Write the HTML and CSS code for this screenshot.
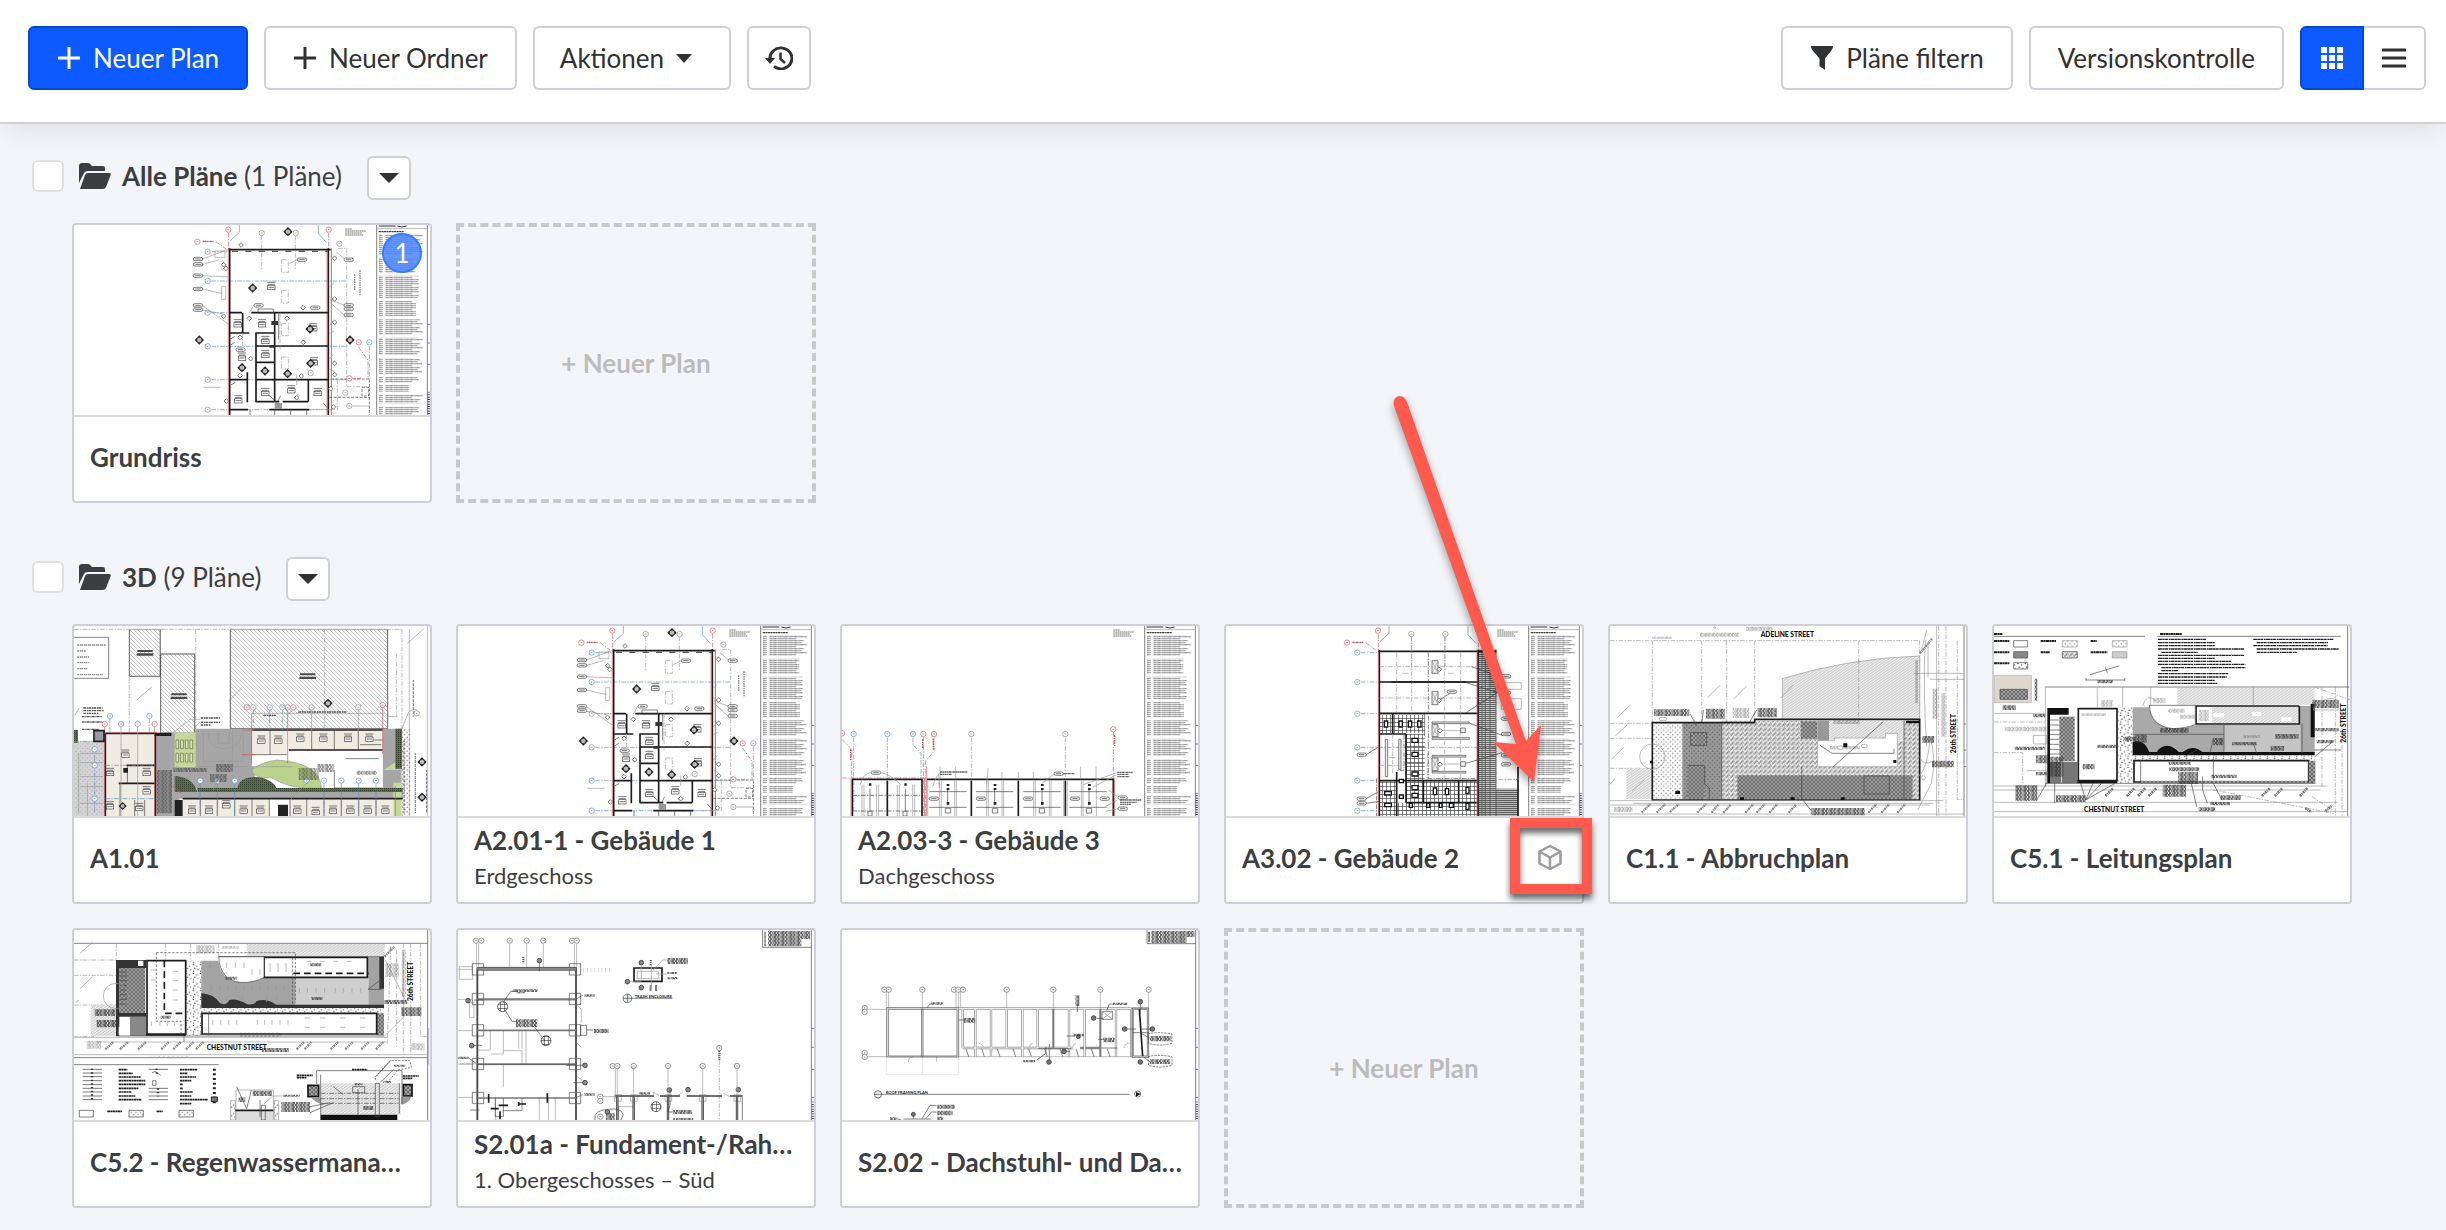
FILE: index.html
```html
<!DOCTYPE html>
<html lang="de">
<head>
<meta charset="utf-8">
<meta name="viewport" content="width=device-width, initial-scale=1">
<title>Pläne</title>
<link rel="stylesheet" href="styles.css">
</head>
<body>
<svg class="defs" width="0" height="0" aria-hidden="true">
  <defs>
    <pattern id="hatch" width="12" height="12" patternUnits="userSpaceOnUse"><rect width="12" height="12" fill="#fff"/><path d="M0 0L12 12M-2 10L2 14M10 -2L14 2" stroke="#aaa" stroke-width="2" fill="none"/></pattern>
    <pattern id="hatch2" width="12" height="8" patternUnits="userSpaceOnUse"><rect width="12" height="8" fill="#ececec"/><path d="M0 8L12 0" stroke="#b0b0b0" stroke-width="2"/></pattern>
    <pattern id="cross" width="14" height="14" patternUnits="userSpaceOnUse"><path d="M0 4L4 0M0 10L14 3M4 14L10 0M0 14L14 6M10 14L14 10" stroke="#555" stroke-width="1.5" fill="none"/></pattern>
    <pattern id="crossdark" width="12" height="12" patternUnits="userSpaceOnUse"><rect width="12" height="12" fill="#a2a2a2"/><path d="M0 12L12 0M0 0L12 12" stroke="#4b4b4b" stroke-width="2"/></pattern>
    <pattern id="dots" width="14" height="14" patternUnits="userSpaceOnUse"><path d="M2 2h3v3h-3zM9 9h3v3h-3z" fill="#333"/></pattern>
    <pattern id="specks" width="22" height="26" patternUnits="userSpaceOnUse"><path d="M2 3h4v3h-4zM13 7h3v4h-3zM6 14h4v3h-4zM17 18h3v3h-3zM3 22h3v3h-3z" fill="#333"/></pattern>
    <pattern id="green" width="6" height="6" patternUnits="userSpaceOnUse"><rect width="6" height="6" fill="#5a6b4c"/><path d="M0 0h3v3h-3z" fill="#37452e"/></pattern>
    <pattern id="grid" width="12" height="12" patternUnits="userSpaceOnUse"><path d="M0 1H12M1 0V12" stroke="#222" stroke-width="2"/></pattern>
    <pattern id="rows" width="200" height="6" patternUnits="userSpaceOnUse"><path d="M0 2H200" stroke="#333" stroke-width="3"/></pattern>
    <pattern id="words" width="164" height="24" patternUnits="userSpaceOnUse" x="968" y="0">
      <g stroke="#777" stroke-width="3" stroke-dasharray="7 1 4 1 10 2 5 1"><path d="M0 2h12M20 2h96M0 8h12M20 8h112M0 14h12M20 14h80M0 20h12M20 20h104"/></g>
    </pattern>
    <pattern id="scrawl" width="47" height="12" patternUnits="userSpaceOnUse">
      <g stroke="#333" stroke-width="4" stroke-dasharray="6 2 3 2 8 2"><path d="M0 3h47M3 9h44"/></g>
    </pattern>

    <symbol id="mark" viewBox="-14 -14 28 28" overflow="visible"><path d="M0 -14L14 0L0 14L-14 0z" fill="#222"/><circle r="8" fill="#bbb" stroke="#111" stroke-width="2"/></symbol>
    <g id="bubble"><circle r="8" fill="#fff" stroke="currentColor" stroke-width="2"/><path d="M-3 0h6" stroke="currentColor" stroke-width="2"/></g>
    <g id="tag"><rect x="-14" y="-5" width="28" height="10" rx="5" fill="#fff" stroke="#444" stroke-width="2"/><path d="M-8 0h16" stroke="#777" stroke-width="3"/></g>
    <g id="dia"><path d="M0 -7L7 0L0 7L-7 0z" fill="#fff" stroke="#444" stroke-width="2"/></g>
    <g id="room"><path d="M-12 -10h24M-10 -4h20" stroke="#777" stroke-width="3"/><rect x="-11" y="-1" width="22" height="13" fill="#fff" stroke="#444" stroke-width="2"/><path d="M-8 5h16" stroke="#777" stroke-width="3"/></g>

    <!-- Legend column printed on the right edge of the A sheets -->
    <g id="legend">
      <path class="k" d="M962 48V618M1114 48V618M1114 346h8M1114 402h8M1114 466h8M1114 550h8"/>
      <path class="g" d="M962 59h152"/>
      <path d="M968 51h50M1024 51q14 6 28 0" stroke="#333" stroke-width="3" fill="none"/>
      <path d="M968 68h76" stroke="#444" stroke-width="4" stroke-dasharray="8 1 5 1"/>
      <path fill="url(#words)" d="M968 76h140v62h-140zM968 146h110v46h-110zM968 200h120v68h-120zM968 276h112v46h-112zM968 331h132v46h-132zM968 386h140v52h-140zM968 448h130v48h-130zM968 503h120v18h-120zM968 528h90v20h-90zM968 558h136v25h-136zM968 594h120v24h-120z"/>
      <path d="M868 60h20M868 66h62M868 72h50M868 78h54" stroke="#777" stroke-width="3" stroke-dasharray="6 1 4 1"/>
      <path d="M1118 556v62" stroke="#333" stroke-width="7" stroke-dasharray="3 4"/>
    </g>

    <!-- Axes shared by the floor plan and the ceiling plan -->
    <g id="axes">
      <path class="b" d="M550 48v22l-28 26M787 48v26l24 26"/>
      <path class="g dd" d="M617 80V180M718 80V180"/>
      <path class="r dd" d="M518 72V120M818 72V120M480 98l30 22"/>
      <path d="M440 97h34" stroke="#d8545c" stroke-width="4" stroke-dasharray="6 1 3 1"/>
      <g color="#d8545c"><use href="#bubble" x="517" y="62"/><use href="#bubble" x="818" y="62"/><use href="#bubble" x="424" y="98"/></g>
      <g color="#888"><use href="#bubble" x="617" y="72"/><use href="#bubble" x="719" y="72"/></g>
      <path class="b dd" d="M466 128H520M466 216H870M466 311H520M466 412H870M466 512H870M466 602H820"/>
      <g color="#5b8fc4"><use href="#bubble" x="455" y="128"/><use href="#bubble" x="455" y="216"/><use href="#bubble" x="455" y="311"/><use href="#bubble" x="455" y="412"/><use href="#bubble" x="455" y="512"/><use href="#bubble" x="455" y="602"/></g>
    </g>

    <symbol id="floorplan" viewBox="54 48 1068 570">
      <use href="#legend"/>
      <use href="#axes"/>
      <path class="k2" d="M521 118V618M817 118V618"/>
      <path class="r" d="M517 118V618M813 118V618"/>
      <path class="k2" d="M518 122H824M522 311h36M586 311H818M656 311V512M522 372h58M598 372h56M600 372V580M656 460h-54M602 411H818M560 311v60M522 512h52M600 512H818M656 512v66M757 512v66M574 490v90M600 578h70M680 578h76M522 602h54M640 602H760"/>
      <path class="k" d="M826 118V618M668 311v80M656 602v16M582 602v16M704 602v16M752 602v16M606 300h46v12h-46z"/>
      <path d="M528 127H816" stroke="#555" stroke-width="4" stroke-dasharray="18 22"/>
      <path class="g dd" d="M846 118h26v415h60M560 372v40M672 311v110M844 512v90h-84"/>
      <path class="g dd" d="M677 152h20v38h-20zM677 244h20v38h-20zM677 344h20v36h-20zM677 444h20v36h-20z"/>
      <path class="k" d="M826 510h116M820 565h120M940 512v106M918 535h20v26h-20z" stroke-dasharray="9 4"/>
      <path class="g" d="M440 150l80-30M440 166l50-14M440 200l80 4M440 240l60 14M440 290l78 56M440 304l60 10M700 164l24-12M840 128l26 22M820 272l44 16M822 280l42 38M580 312l14-24M497 233h12v38h-12zM477 126h30v20h-30zM442 535h52M722 496v32M820 235l12-12M820 262l14 12M820 350l12-14M820 374l14-8M820 450l12-14M820 480l14 8"/>
      <path class="k" d="M524 390l12-8M524 408l12-8M524 528l14-8M640 560l14 12M674 560l-8 16M802 582l12 14"/>
      <path class="r dd" d="M908 414l28 40v56M876 508h40"/>
      <path class="b dd" d="M940 410v100"/>
      <g color="#d8545c"><use href="#bubble" x="908" y="400"/><use href="#bubble" x="880" y="508"/></g>
      <g color="#5b8fc4"><use href="#bubble" x="940" y="400"/></g>
      <g color="#888"><use href="#bubble" x="868" y="551"/><use href="#bubble" x="880" y="591"/><use href="#bubble" x="764" y="492"/><use href="#bubble" x="850" y="104"/></g>
      <path class="g" d="M890 591h50"/>
      <g><use href="#tag" x="426" y="150"/><use href="#tag" x="426" y="166"/><use href="#tag" x="426" y="200"/><use href="#tag" x="426" y="240"/><use href="#tag" x="426" y="289"/><use href="#tag" x="426" y="302"/><use href="#tag" x="738" y="152"/><use href="#tag" x="878" y="152"/><use href="#tag" x="608" y="289"/><use href="#tag" x="778" y="296"/><use href="#tag" x="878" y="289"/><use href="#tag" x="878" y="300"/><use href="#tag" x="878" y="318"/><use href="#tag" x="554" y="422"/></g>
      <g><use href="#dia" x="555" y="108"/><use href="#dia" x="503" y="167"/><use href="#dia" x="510" y="178"/><use href="#dia" x="836" y="148"/><use href="#dia" x="836" y="270"/><use href="#dia" x="741" y="296"/><use href="#dia" x="580" y="328"/><use href="#dia" x="693" y="328"/><use href="#dia" x="836" y="340"/><use href="#dia" x="742" y="400"/><use href="#dia" x="552" y="385"/><use href="#dia" x="836" y="463"/><use href="#dia" x="584" y="449"/><use href="#dia" x="552" y="500"/><use href="#dia" x="736" y="501"/><use href="#dia" x="836" y="497"/><use href="#dia" x="722" y="566"/><use href="#dia" x="824" y="539"/><use href="#dia" x="832" y="594"/><use href="#dia" x="511" y="576"/><use href="#dia" x="503" y="322"/></g>
      <g><use href="#room" x="646" y="230"/><use href="#room" x="545" y="342"/><use href="#room" x="618" y="342"/><use href="#room" x="772" y="354"/><use href="#room" x="628" y="392"/><use href="#room" x="628" y="434"/><use href="#room" x="774" y="456"/><use href="#room" x="558" y="442"/><use href="#room" x="628" y="548"/><use href="#room" x="706" y="540"/><use href="#room" x="785" y="548"/><use href="#room" x="547" y="570"/></g>
      <g><use href="#mark" x="682" y="54" width="28" height="28"/><use href="#mark" x="576" y="223" width="28" height="28"/><use href="#mark" x="416" y="379" width="28" height="28"/><use href="#mark" x="868" y="379" width="28" height="28"/><use href="#mark" x="748" y="346" width="28" height="28"/><use href="#mark" x="750" y="449" width="28" height="28"/><use href="#mark" x="544" y="462" width="28" height="28"/><use href="#mark" x="681" y="480" width="28" height="28"/><use href="#mark" x="613" y="472" width="28" height="28"/></g>
      <path d="M896 196v48M912 184v76" stroke="#888" stroke-width="4" stroke-dasharray="5 2"/>
      <path d="M646 336h20v12h-20zM640 408h16v8h-16z" fill="#333"/>
      <path d="M656 582h22v18h-22z" fill="#999"/>
    </symbol>
  </defs>
</svg>

<header class="toolbar">
  <button class="btn btn-primary" type="button">
    <svg class="icon" viewBox="0 0 24 24"><path d="M12 1V23M1 12H23" stroke="currentColor" stroke-width="3" fill="none"/></svg>
    Neuer Plan
  </button>
  <button class="btn" type="button">
    <svg class="icon" viewBox="0 0 24 24"><path d="M12 1V23M1 12H23" stroke="currentColor" stroke-width="3" fill="none"/></svg>
    Neuer Ordner
  </button>
  <button class="btn btn-menu" type="button">
    Aktionen
    <svg class="caret" viewBox="0 0 16 9"><path d="M0 0H16L8 9z" fill="currentColor"/></svg>
  </button>
  <button class="btn btn-square" type="button" aria-label="Verlauf">
    <svg class="icon-lg" viewBox="0 0 28 24"><path d="M5 13A11 11 0 1 1 9 20.500" stroke="currentColor" stroke-width="3" fill="none" transform="translate(0 1) scale(1 .95)"/><path d="M0 12H10L5 18z" fill="currentColor"/><path d="M15.500 6.500V13L20 17" stroke="currentColor" stroke-width="2.500" fill="none"/></svg>
  </button>
  <div class="spacer"></div>
  <button class="btn" type="button">
    <svg class="icon" viewBox="0 0 24 24"><path d="M1 0H23Q23.500 2 21 5L15 12.500V24L9.500 20V12.500L3 5Q.5 2 1 0z" fill="currentColor"/></svg>
    Pläne filtern
  </button>
  <button class="btn" type="button">Versionskontrolle</button>
  <div class="switch" role="group" aria-label="Ansicht">
    <button class="btn btn-square btn-primary" type="button" aria-label="Kacheln" aria-pressed="true">
      <svg class="icon" viewBox="0 0 24 24"><path d="M1 1h6v6h-6zM9 1h6v6h-6zM17 1h6v6h-6zM1 9h6v6h-6zM9 9h6v6h-6zM17 9h6v6h-6zM1 17h6v6h-6zM9 17h6v6h-6zM17 17h6v6h-6z" fill="currentColor"/></svg>
    </button>
    <button class="btn btn-square" type="button" aria-label="Liste" aria-pressed="false">
      <svg class="icon" viewBox="0 0 24 24"><path d="M1 4H23M1 12H23M1 20H23" stroke="currentColor" stroke-width="3" stroke-linecap="round"/></svg>
    </button>
  </div>
</header>

<main class="content">
  <section class="folder">
    <div class="folder-head">
      <input class="check" type="checkbox" id="f1">
      <label class="folder-label" for="f1">
        <svg class="folder-icon" viewBox="0 0 32 26"><path d="M0 20V3Q0 0 3 0H9Q11 0 12 2L13 3H24Q26 3 26 5V8H9Q6 8 5 10z" fill="currentColor"/><path d="M1 26L6 12Q7 10 9 10H30Q32.500 10 31.500 12.500L27 24Q26 26 24 26z" fill="currentColor"/></svg>
        <span><strong>Alle Pläne</strong> (1 Pläne)</span>
      </label>
      <button class="btn drop" type="button" aria-label="Ordnermenü"><svg class="caret caret-lg" viewBox="0 0 20 10"><path d="M0 0H20L10 10z" fill="currentColor"/></svg></button>
    </div>
    <div class="grid">
      <article class="card">
        <div class="thumb"><svg viewBox="54 48 1068 570" preserveAspectRatio="none"><use href="#floorplan" x="54" y="48" width="1068" height="570"/></svg></div>
        <span class="badge">1</span>
        <div class="foot"><h3>Grundriss</h3></div>
      </article>
      <button class="add" type="button">+ Neuer Plan</button>
    </div>
  </section>

  <section class="folder">
    <div class="folder-head">
      <input class="check" type="checkbox" id="f2">
      <label class="folder-label" for="f2">
        <svg class="folder-icon" viewBox="0 0 32 26"><path d="M0 20V3Q0 0 3 0H9Q11 0 12 2L13 3H24Q26 3 26 5V8H9Q6 8 5 10z" fill="currentColor"/><path d="M1 26L6 12Q7 10 9 10H30Q32.500 10 31.500 12.500L27 24Q26 26 24 26z" fill="currentColor"/></svg>
        <span><strong>3D</strong> (9 Pläne)</span>
      </label>
      <button class="btn drop" type="button" aria-label="Ordnermenü"><svg class="caret caret-lg" viewBox="0 0 20 10"><path d="M0 0H20L10 10z" fill="currentColor"/></svg></button>
    </div>
    <div class="grid">

      <article class="card">
        <div class="thumb"><svg viewBox="222 258 1068 570" preserveAspectRatio="none">
          <path fill="url(#hatch)" class="g" d="M388 268h92v141h-92zM482 342h102v236h-102zM691 268h472v298H691z"/>
          <path class="k" d="M388 268v141h93V268M482 342h102v236M482 342v236M691 268v298h472V268M222 292h104v123H222"/>
          <path class="g dd" d="M222 268H1206M388 409v170M587 268v400M974 268v300M1206 268v560M1190 340v190"/>
          <path class="g" d="M1282 258v570M1228 268v560M410 480l46-40M686 484l40-42M1222 310l50-44"/>
          <path d="M232 315h86M232 333h26M232 351h36M232 368h34M232 386h32M232 404h76M1240 420v110M1246 640v180M1212 600v220M1280 690v130" stroke="#888" stroke-width="4" stroke-dasharray="6 2 3 1" fill="none"/>
          <path d="M250 504h58M250 512h62M250 520h46M246 530h60M246 546h60M246 568h50M602 534h58M602 547h58M602 555h30M790 526h40M895 516h146" stroke="#555" stroke-width="4" stroke-dasharray="8 2 4 1"/>
          <path fill="#4a4a4a" d="M412 330h46v6h-46zM410 340h50v7h-50zM514 460h46v6h-46zM512 470h50v7h-50zM900 400h46v6h-46zM898 410h50v7h-50z"/>
          <path fill="#d6d6d8" d="M222 604h94v224h-94z"/>
          <path fill="url(#dots)" opacity=".4" d="M222 604h94v224h-94z"/>
          <path class="g" d="M240 640h70M240 668h70M240 710h70M240 740h70M240 790h70M236 640v180M262 730v98"/>
          <path fill="#a6a6a6" d="M464 578h74v250h-74zM586 566h170v180H586zM538 756h670v20H538zM524 680h240v66H524zM1148 566h56v180h-56z"/>
          <path fill="#efece1" d="M318 582h146v246H318zM756 572h106v72H756zM866 572h282v56H866zM548 778h260v50H548zM868 778h312v50H868z"/>
          <path fill="#c3d89a" d="M524 578h62v102h-62zM1180 728h24v100h-24zM1152 690l52-36v36z"/>
          <path fill="#fff" d="M864 632h284v112H864z"/>
          <path fill="#b9d38b" class="g" d="M756 692Q770 670 830 660Q960 668 964 744H910Q860 740 816 714Q760 716 756 692z"/>
          <path fill="url(#green)" d="M524 708Q580 712 592 756H524zM712 744Q720 706 780 712Q830 724 832 756H712zM592 744h616v12H592zM1186 566h20v120h-20zM222 570h12v38h-12z"/>
          <path d="M528 600h8v26h-8zM542 600h8v26h-8zM556 600h8v26h-8zM570 600h8v26h-8zM528 640h8v26h-8zM542 640h8v26h-8zM556 640h8v26h-8zM570 640h8v26h-8z" fill="#dce9bd" stroke="#5b6b3d" stroke-width="2"/>
          <path class="g" d="M610 578v86h120v-86M624 578q0 46 46 48q54-2 54-48M654 578v32h34v-32M698 566v112M586 680h290"/>
          <path class="k2" d="M316 580h150M756 570h392M866 630h282M548 776h660M380 676h84M356 730h108M316 580v248M466 580v248"/>
          <path class="k" d="M810 572v72M756 644h106M935 572v56M1003 572v56M1075 572v56M601 778v50M652 778v50M704 778v50M756 778v50M808 778v50M870 778v50M920 778v50M972 778v50M1024 778v50M1076 778v50M1128 778v50M360 730v98M382 676v54M404 780v48M434 780v48M1003 690v54h145M1120 600l30 0M1080 614h64M1036 656h100"/>
          <path class="b dd" d="M222 604h90M284 620v200M316 676h150M316 776h150M600 730v98M652 730v98M704 730v98M972 730v98M1024 730v98M1076 730v98M1128 730v98M330 536v40M448 536v40M809 510v60M847 510v60M760 510v60"/>
          <path class="r" d="M314 560v268M464 560v268M755 520v150M863 510v160M1148 502v140M508 730l36 30M724 570h40M724 644h40M878 510l-14 12M1186 740v88M314 578h156"/>
          <path class="g" d="M363 560v268M413 560v268M935 510v70M1075 510v70M755 520h400M1163 530h30"/>
          <g color="#d8545c"><use href="#bubble" x="314" y="552"/><use href="#bubble" x="464" y="552"/><use href="#bubble" x="740" y="502"/><use href="#bubble" x="863" y="502"/><use href="#bubble" x="880" y="502"/><use href="#bubble" x="1148" y="495"/></g>
          <g color="#5b8fc4"><use href="#bubble" x="330" y="528"/><use href="#bubble" x="448" y="528"/><use href="#bubble" x="760" y="502"/><use href="#bubble" x="809" y="502"/><use href="#bubble" x="847" y="502"/><use href="#bubble" x="601" y="722"/><use href="#bubble" x="652" y="722"/><use href="#bubble" x="704" y="722"/><use href="#bubble" x="920" y="722"/><use href="#bubble" x="972" y="722"/><use href="#bubble" x="1024" y="722"/><use href="#bubble" x="1076" y="722"/><use href="#bubble" x="1128" y="722"/><use href="#bubble" x="284" y="628"/><use href="#bubble" x="284" y="676"/><use href="#bubble" x="284" y="776"/></g>
          <g color="#888"><use href="#bubble" x="363" y="552"/><use href="#bubble" x="413" y="552"/><use href="#bubble" x="935" y="502"/><use href="#bubble" x="1075" y="502"/><use href="#bubble" x="1250" y="520"/></g>
          <g><use href="#room" x="376" y="640"/><use href="#room" x="440" y="695"/><use href="#room" x="330" y="695"/><use href="#room" x="440" y="750"/><use href="#room" x="330" y="795"/><use href="#room" x="418" y="800"/><use href="#room" x="784" y="598"/><use href="#room" x="835" y="598"/><use href="#room" x="901" y="592"/><use href="#room" x="970" y="592"/><use href="#room" x="1044" y="592"/><use href="#room" x="1108" y="592"/><use href="#room" x="576" y="808"/><use href="#room" x="627" y="808"/><use href="#room" x="679" y="792"/><use href="#room" x="731" y="808"/><use href="#room" x="781" y="808"/><use href="#room" x="892" y="808"/><use href="#room" x="947" y="812"/><use href="#room" x="999" y="808"/><use href="#room" x="1051" y="808"/><use href="#room" x="1103" y="808"/><use href="#room" x="1156" y="808"/></g>
          <path fill="url(#scrawl)" opacity=".7" d="M648 672h50v24h-50zM896 684h60v36h-60zM952 672h50v24h-50zM520 684h100v12h-100zM630 702h50v24h-50zM470 690h46v130h-46zM1070 692h60v12h-60z"/>
          <path fill="url(#dots)" d="M1206 566h26v262h-26z"/>
          <path d="M282 572h30v32h-30z" stroke="#222" stroke-width="5" fill="#99a"/><path d="M834 794h30v34h-30zM524 780h24v48h-24zM370 684h14v14h-14zM464 578h50v10h-50z" fill="#222"/>
          <g><use href="#mark" x="970" y="476" width="28" height="28"/><use href="#mark" x="1252" y="652" width="28" height="28"/><use href="#mark" x="1252" y="758" width="28" height="28"/><use href="#mark" x="356" y="786" width="24" height="24"/></g>
          <path class="g" d="M520 578l50-40h30M586 560l14-14M1206 566l20-50q10-8 24-8M224 526l14-22M640 750l20-50M870 780l60-60"/>
        </svg></div>
        <div class="foot"><h3>A1.01</h3></div>
      </article>

      <article class="card">
        <div class="thumb"><svg viewBox="54 48 1068 570" preserveAspectRatio="none"><use href="#floorplan" x="54" y="48" width="1068" height="570"/></svg></div>
        <div class="foot"><h3>A2.01-1 - Gebäude 1</h3><p>Erdgeschoss</p></div>
      </article>

      <article class="card">
        <div class="thumb"><svg viewBox="36 48 1068 570" preserveAspectRatio="none">
          <use href="#legend" x="-18"/>
          <path class="r dd" d="M36 388l29 30v86M280 380v238M312 382v42l-26 30v164M850 366V618M36 504h246"/>
          <path d="M62 418v32M278 388v26M310 386v34M854 376v32" stroke="#d8545c" stroke-width="4" stroke-dasharray="5 2"/>
          <path class="b dd" d="M71 382V618M172 382V618M249 382v22l24 26v74"/>
          <path class="g dd" d="M424 382v122M706 382v122"/>
          <g color="#d8545c"><use href="#bubble" x="36" y="370"/><use href="#bubble" x="280" y="372"/><use href="#bubble" x="312" y="372"/><use href="#bubble" x="850" y="358"/></g>
          <g color="#5b8fc4"><use href="#bubble" x="71" y="372"/><use href="#bubble" x="172" y="372"/><use href="#bubble" x="249" y="372"/></g>
          <g color="#888"><use href="#bubble" x="424" y="372"/><use href="#bubble" x="706" y="372"/></g>
          <path class="k2" d="M65 508H278M290 508H852M67 508v110M276 508v110M424 512v106M172 512v106M565 512v106M706 512v106M850 508v110"/>
          <path class="r" d="M63 504v114M284 504v114M853 504v114M290 470v148"/>
          <path class="g" d="M96 524v94M102 524v94M140 524v94M146 524v94M202 524v94M208 524v94M248 524v94M254 524v94M293 512v106M329 512v106M334 512v106M374 512v106M379 512v106M470 512v106M475 512v106M516 512v106M521 512v106M611 512v106M616 512v106M658 512v106M663 512v106M701 512v106M712 512v106M754 512v106M759 512v106M799 512v106M330 470v36M377 470v36M516 486v20M565 486v20M610 486v20M752 470v36M798 470v36M474 474l-4 48"/>
          <path class="k" d="M298 545h112M298 592h112M438 545h112M438 592h112M580 545h112M580 592h112M718 545h112M718 592h112M120 536v68M226 536v68M353 540v46M494 540v46M636 540v46M777 540v46"/>
          <path class="k dd" d="M67 556h210M67 603h210"/>
          <path class="k" fill="#fff" d="M346 595h16v14h-16zM487 595h16v14h-16zM628 595h16v14h-16zM769 595h16v14h-16zM114 604h12v14h-12zM219 604h12v14h-12z"/>
          <path class="g" d="M90 526q10-38 34-38M152 488q30 4 60 36M328 490q-10 10-20 40M326 492l2 42M636 520l36-28M860 488l-100 36M860 494l-72 38M862 560l-26-20M862 570l-36 20M864 596l-38 8"/>
          <path fill="#222" d="M117 520h7v7h-7zM223 520h7v7h-7zM350 522h8v6h-8zM491 522h8v6h-8zM633 522h8v6h-8zM774 522h8v6h-8zM350 534h8v6h-8zM491 534h8v6h-8zM633 534h8v6h-8zM774 534h8v6h-8zM350 576h8v8h-8zM491 576h8v8h-8zM633 576h8v8h-8zM774 576h8v8h-8z"/>
          <path d="M330 486h82M330 493h36M862 487h46M862 493h34M862 500h36M870 570h64M870 577h50M870 583h34M700 491h34" stroke="#666" stroke-width="4" stroke-dasharray="7 1 4 1"/>
          <g><use href="#tag" x="138" y="488"/><use href="#tag" x="686" y="491"/><use href="#tag" x="312" y="566"/><use href="#tag" x="453" y="566"/><use href="#tag" x="594" y="566"/><use href="#tag" x="735" y="566"/><use href="#tag" x="824" y="566"/><use href="#tag" x="878" y="563"/><use href="#tag" x="878" y="596"/></g>
        </svg></div>
        <div class="foot"><h3>A2.03-3 - Gebäude 3</h3><p>Dachgeschoss</p></div>
      </article>

      <article class="card card-marked">
        <div class="thumb"><svg viewBox="48 48 1068 570" preserveAspectRatio="none">
          <use href="#legend" x="-6"/>
          <use href="#axes" x="-13"/>
          <path fill="url(#grid)" d="M510 314h46v56h-46zM556 314h88v56h-88zM588 372h56v140h-56zM508 514h52v104h-52zM588 514h216v64h-216zM560 578h244v40H560z"/>
          <path fill="#e4e4e4" d="M806 536h114v82H806z"/>
          <path fill="url(#rows)" d="M806 118h52v500h-52zM858 536h66v82h-66z"/>
          <path class="k" d="M806 118v500M816 118v500M826 118v500M840 118v500M858 118v500"/>
          <path class="k2" d="M504 124H860M508 120v498M804 120v498M508 216h296M508 310h296M548 310v62M508 372h80M588 372v206M508 512h296M588 578h216M640 514v64M746 514v64M560 486v132M924 470v148"/>
          <path class="k" d="M644 310v68M588 412h56M588 460h56"/>
          <path class="g dd" d="M560 128v182M605 80v230M704 80v430M752 128v382M508 170h296M508 264h296M548 372v120M508 466h80M652 430v80M860 118v415"/>
          <path class="k dd" d="M655 128v182M655 318v186M652 506h150M500 505v113M582 375v106h-24"/>
          <path class="k2" d="M544 216h224"/>
          <path class="r" d="M505 118v500M801 118v500"/>
          <path fill="#eee" class="k" d="M666 152h18v38h-18zM666 244h18v40h-18zM666 344h18v36h-18zM666 444h18v38h-18zM526 388h7v112h-7zM566 388h7v90h-7zM666 336h112v5h-112zM666 383h112v5h-112zM666 436h102v5h-102zM666 484h102v5h-102zM752 354h14v14h-14zM752 455h14v14h-14z"/>
          <path class="g" d="M666 152l18 38M684 152l-18 38M666 244l18 40M684 244l-18 40M666 344l18 36M684 344l-18 36M666 444l18 38M684 444l-18 38M684 362h68M684 462h68M536 443h20M576 190h20M714 190h18"/>
          <g><use href="#dia" x="688" y="178"/><use href="#dia" x="688" y="271"/><use href="#dia" x="690" y="362"/><use href="#dia" x="690" y="463"/></g>
          <path fill="#fff" stroke="#111" stroke-width="4" d="M523 333h10v18h-10zM567 333h10v18h-10zM595 333h10v18h-10zM623 333h10v18h-10zM606 385h18v12h-18zM606 427h18v12h-18zM606 486h18v12h-18zM524 545h20v10h-20zM524 580h20v10h-20zM606 527h18v12h-18zM606 550h18v12h-18zM670 534h10v20h-10zM706 536h10v18h-10zM768 532h9v18h-9zM768 580h9v18h-9zM718 580h12v12h-12zM688 580h8v12h-8zM650 580h9v12h-9zM598 580h9v12h-9zM568 508h12v10h-12zM568 555h12v10h-12z"/>
          <path class="k" d="M768 218l96 30M768 308l100-64M780 340l96 36M768 460l108-32M784 170l88 30M468 434l36-22M468 566l36-20M468 580l40-6M720 250l-32 20"/>
          <path class="g" d="M874 218h60v20h-60zM874 266h60v32h-60z"/>
          <path class="r dd" d="M866 508h60"/>
          <g><use href="#tag" x="888" y="199"/><use href="#tag" x="888" y="248"/><use href="#tag" x="888" y="326"/><use href="#tag" x="888" y="372"/><use href="#tag" x="888" y="436"/><use href="#tag" x="888" y="463"/><use href="#tag" x="726" y="245"/><use href="#tag" x="455" y="434"/><use href="#tag" x="455" y="566"/><use href="#tag" x="455" y="580"/></g>
        </svg></div>
        <div class="foot"><h3>A3.02 - Gebäude 2</h3>
          <svg class="cube" viewBox="0 0 24 26" aria-label="3D"><path d="M12 1.500L22.500 7V19L12 24.500L1.500 19V7zM1.500 7L12 13L22.500 7M12 13V24.500" fill="none" stroke="currentColor" stroke-width="2.500" stroke-linejoin="round"/></svg>
        </div>
        <div class="frame"></div>
        <svg class="arrow" viewBox="0 0 172 400" aria-hidden="true"><path d="M10 14Q8 6 15 4Q21 4 23 10L142 349L157 333L150 390L109 350L132 352z" fill="#ff5a4d"/></svg>
      </article>

      <article class="card">
        <div class="thumb"><svg viewBox="60 48 1068 570" preserveAspectRatio="none">
          <path class="g dd" d="M60 92H990M187 92V338M335 92V338M410 92V338M494 92V330M806 92V330M989 92V570M60 340h127M60 385h127M60 475h127M1046 48v570M1068 48v570M1102 92v476h20"/>
          <path class="g" fill="url(#hatch2)" d="M577 206Q780 144 989 138V328H577z"/>
          <path class="g dd" d="M806 150v178"/>
          <path fill="url(#hatch2)" d="M109 475h78v93h-78zM717 332h225v58H717z"/>
          <path fill="url(#dots)" d="M187 340h90v228h-90z"/>
          <path fill="#9a9a9a" d="M277 340h118v228H277z"/><path fill="url(#dots)" d="M277 340h118v228H277z"/>
          <path fill="url(#cross)" d="M395 332h288v236h-288zM683 470h306v98H683zM942 332h47v140h-47zM920 392h24v80h-24z"/>
          <path fill="url(#crossdark)" d="M442 496h526v72H442zM292 466h52v102h-52zM302 368h48v38h-48zM632 334h50v52h-50z"/>
          <path fill="#999" d="M683 332h34v60h-34z"/>
          <path fill="#fff" class="g" d="M683 392h50v-8h154v-14h35v100H683z"/>
          <path class="k2" d="M187 338H494V328H989V570H187z"/>
          <path class="k" d="M395 338v232M942 332v238M822 498h76v54h-76zM292 466h52v56l14 12v34M302 368h48v38h-48zM635 470v98"/>
          <path class="g" d="M60 572h1000M60 585h960M60 612h1062M130 580h900M989 440q10 30 38 14M1010 60l-18 70M1006 90q-8 140 4 320M1014 100v100M1040 48v570M970 190h150M1020 208h102M986 500q30-30 34-120q20 60 4 140l-40 78"/>
          <path class="k" d="M880 335L728 472M690 406l36 24h186v-14M340 300l-4 36M500 300l-20 34M300 312l20 34M640 572l24 30"/>
          <g class="g"><path d="M352 264l38-38M432 266l38-38M572 264l36-38M82 322l40-38M76 378l36-34M66 446l36-34M126 544l36-34M60 524l16-20"/></g>
          <circle cx="187" cy="440" r="38" class="g" fill="none"/>
          <path fill="url(#scrawl)" d="M192 298h106v20H192zM348 296h56v30h-56zM502 294h58v28h-58zM664 594h160v22H664zM1026 452h66v20h-66zM996 378h36v20h-36z"/>
          <path fill="url(#scrawl)" opacity=".45" d="M468 50h80v12h-80zM330 68h116v12H330zM428 294h50v30h-50zM186 80h60v6h-60zM730 326h80v16h-80zM1028 236h14v90h-14zM1054 250h12v130h-12zM975 150h8v130h-8zM72 590h56v16H72zM720 408h90v10h-90z"/>
          <g stroke="#888" stroke-width="7" stroke-dasharray="6 2 3 2"><path d="M155 608l26-26M200 608l26-26M240 606l26-24M322 608l26-26M365 608l20-24M400 608l22-24M466 608l24-26M500 608l24-26M538 608l24-26M596 608l22-24M835 608l24-26M874 608l24-26M922 608l24-26M990 130l36-44"/></g>
          <g class="g" fill="#fff"><rect x="742" y="408" width="16" height="10" rx="5"/><rect x="814" y="403" width="18" height="10" rx="5"/><rect x="208" y="322" width="22" height="10" rx="5"/><circle cx="374" cy="53" r="3"/><circle cx="1000" cy="503" r="6"/></g>
          <path fill="#111" d="M760 400h12v12h-12zM910 450h9v9h-9zM180 452h8v8h-8zM450 562h12v8h-12zM602 562h12v8h-12zM752 562h12v8h-12zM256 542h14v10h-14zM948 332h40v8h-40z"/>
          <text class="street" x="512" y="82">ADELINE STREET</text>
          <text class="street" transform="translate(1097 430) rotate(-90)">26th STREET</text>
          <path class="k" d="M1122 48v570M1122 342h6M1122 420h6M1122 470h6"/>
        </svg></div>
        <div class="foot"><h3>C1.1 - Abbruchplan</h3></div>
      </article>

      <article class="card">
        <div class="thumb"><svg viewBox="42 48 1068 570" preserveAspectRatio="none">
          <path class="k" d="M42 79H495M532 79h550M1103 48v570M196 231h912"/>
          <path d="M42 72h26M42 93h46M42 127h46M42 160h46M182 93h46M182 127h28M332 93h18M332 127h50M540 72h66" stroke="#222" stroke-width="6" stroke-dasharray="9 1 5 1"/>
          <path class="k" fill="#fff" d="M101 92h42v19h-42z"/><path class="k" fill="#888" d="M101 125h42v19h-42z"/><path class="k" fill="url(#specks)" d="M101 158h42v19h-42z"/>
          <path class="g" fill="url(#dots)" d="M247 92h45v19h-45zM397 92h44v19h-44z"/><path class="k" fill="url(#cross)" d="M247 125h45v19h-45z"/><path class="g" fill="#ccc" d="M397 125h44v19h-44z"/>
          <path d="M42 196h112v82H42z" fill="#ddd8cb" stroke="#aaa" stroke-width="2"/><path class="k" fill="url(#crossdark)" d="M60 238h82v30H60z"/>
          <path class="k" d="M330 194l86-26M376 172l6 16M318 210h116M318 204v8M434 204v8"/>
          <path fill="url(#scrawl)" d="M68 286h40v14H68zM164 206h8v66h-8zM352 210h46v10h-46z"/>
          <g stroke="#222" stroke-width="4" stroke-dasharray="12 1 7 1 9 2 5 1" fill="none"><path d="M534 88h146M534 98h170M534 107h170M534 117h260M544 127h110M534 136h260M534 145h170M534 154h220M534 163h262M544 173h252M544 182h50M534 191h212M534 201h206M534 211h170M534 220h178M820 88h240M830 98h214M820 107h224M830 117h246M830 127h120"/></g>
          <path fill="url(#hatch2)" d="M592 234h412v50H592z"/>
          <path class="g" d="M352 231v60M428 231v60M512 231v60M820 231v54M196 231v300M42 310h156M488 288q10-40 40-16"/>
          <path class="g dd" d="M42 336h156M42 428h86v92M1026 231v300M1066 231v387M1086 300v318M1004 231l110 40M996 560l60 40M700 540l360 70"/>
          <path fill="#a9a9a9" d="M458 292h50Q520 350 580 356Q640 350 650 344H958V288h46V430H458z"/>
          <path fill="#c4c4c4" d="M732 344h230v84H732z"/>
          <path fill="url(#hatch2)" d="M648 288h310v54H648z"/>
          <path fill="#fff" d="M650 290h46v50h-46zM700 310h32v12h-32zM816 306h28v12h-28zM904 322h30v12h-30z"/>
          <path fill="url(#specks)" d="M414 292h44v228h-44zM458 436h546v16H458z"/>
          <path fill="url(#crossdark)" d="M238 320h46v134h-46z"/>
          <path fill="#777" d="M246 456h46v64h-46zM204 456h40v64h-40z"/>
          <path fill="#111" d="M202 294h64v20h-64zM202 314h8v206h-8zM458 426h546v10H458zM458 430V396Q490 384 508 426Q530 434 534 420Q560 394 590 420Q600 434 612 424Q640 402 672 430zM992 282h12v100h-12zM292 510h120v10H292z"/>
          <path class="k2" fill="#fff" d="M295 296h116v216H295zM462 452h524v64H462z"/>
          <path fill="url(#crossdark)" d="M986 452h20v68h-20zM482 512h502v8H482z"/>
          <path class="k2" d="M648 286v56h310v-54M646 288h312"/>
          <path class="k" fill="#fff" d="M508 286Q512 350 580 356Q620 354 646 344V286z"/>
          <path class="k" d="M458 373h274v-30M732 373v52M210 330h28M210 345h28M210 360h28M210 374h28M210 388h28M210 403h28M210 418h28M210 432h28M966 340v90M196 520h810M202 430v90M482 452v68"/>
          <path class="g" d="M42 528h1000M42 540h980M42 577h1030M42 605h1060M140 482h60v40"/>
          <path class="k" d="M302 520l15 50 22-50M317 570l48-50M317 570l88-50M634 520l16 70M668 500v40l14 40M700 440v70M700 520l26 50M612 440l40 -20M200 520l-30 50M224 520v60M830 430l-10-30M690 430l10-46M1004 440l60-50M1004 420l80 0"/>
          <path fill="url(#scrawl)" d="M106 526h66v46h-66zM228 556h90v20h-90zM168 436h36v24h-36zM168 486h34v10h-34zM104 410h90v10h-90zM352 404h60v10h-60zM308 462h36v16h-36zM540 354h86v14h-86zM568 472h90v12h-90zM594 486h60v36h-60zM548 524h70v36h-70zM722 556h60v14h-60zM690 576h60v10h-60zM656 592h50v12h-50zM886 372h70v14h-70zM872 408h40v14h-40zM756 396h74v10h-74zM700 384h30v22h-30zM694 494h76v10h-76zM996 270h80v24h-80zM1006 354h70v10h-70zM566 456h66v8h-66zM160 312h36v10h-36zM466 374h34v24h-34zM1010 390h50v10h-50zM210 440h40v60h-40zM430 380h50v14h-50z"/>
          <path fill="url(#scrawl)" opacity=".4" d="M74 350h126v14H74zM304 310h74v8h-74zM564 296h50v12h-50zM600 314h46v12h-46zM362 270h36v20h-36zM520 264h36v16h-36zM656 300h30v34h-30zM790 376h50v8h-50z"/>
          <path class="g" fill="none" d="M160 376h40v26h-40zM1004 290q30-34 70-20v30h-74z"/>
          <g stroke="#777" stroke-width="8" stroke-dasharray="6 2 3 2"><path d="M376 558l24-24M440 558l24-24M474 558l22-24M506 558l24-24M846 558l24-24M884 558l24-24M960 558l22-24M976 594l18 12M1036 604l20-18"/></g>
          <text class="street" x="312" y="607">CHESTNUT STREET</text>
          <text class="street" transform="translate(1097 398) rotate(-90)">26th STREET</text>
        </svg></div>
        <div class="foot"><h3>C5.1 - Leitungsplan</h3></div>
      </article>

      <article class="card">
        <div class="thumb"><svg viewBox="42 30 1068 570" preserveAspectRatio="none">
          <path class="k" d="M42 70H1103M1103 30v570M42 413H1103M42 434h434" />
          <path class="g dd" d="M169 70v50M317 70v50M392 70v50M476 70v40M788 70v40M972 70v50M42 120h127M42 166h127M42 255h127M1030 70v340M1052 70v340M1082 70v280h24M42 350h60M992 80l-10 290M1010 90v290"/>
          <path fill="url(#hatch2)" d="M560 72h412v36H560zM92 256h76v92H92z"/>
          <path fill="#a3a3a3" d="M424 122h50Q484 180 540 187Q600 184 612 172H924V110h48V262H424z"/>
          <path fill="#cfcfcf" d="M706 174h220v80H706z"/>
          <path fill="url(#specks)" d="M378 122h46v226h-46zM424 264h548v14H424z"/>
          <path fill="url(#crossdark)" d="M178 144h78v134h-78zM950 280h22v66h-22z"/>
          <path fill="#888" d="M210 290h48v58h-48z"/>
          <path fill="#333" d="M168 120h90v24h-90zM168 120h10v228h-10zM168 278h90v12h-90zM424 254h548v10H424zM424 262V220Q462 222 480 250Q500 258 508 240Q530 234 560 252Q580 258 590 244Q620 230 660 262zM958 110h14v96h-14zM258 338h120v10H258z"/>
          <path class="k2" fill="#fff" d="M261 122h116v220H261zM426 280h524v62H426zM612 112h310v60H612z"/>
          <path fill="#fff" class="k" d="M476 110h136v62Q580 190 540 187Q480 180 476 110z"/>
          <path fill="#fff" d="M234 122h16v16h-16zM176 320h34v26h-34z"/>
          <path class="k" d="M476 110H972M168 348H972M446 280v66M180 156h20M180 168h22M180 182h22M180 196h20M180 210h22M180 224h20M180 238h22M180 252h20M924 208h40v-30l-40 30M372 348v18"/>
          <path class="k2" d="M313 122V280h60M700 160h226" stroke-dasharray="20 12"/>
          <path class="k" stroke-dasharray="7 5" d="M289 98H706v150M289 98V304h74v40M698 112v140M540 340h120v8h-120z"/>
          <path class="g" d="M450 128v16M476 128v16M500 128v16M526 128v16M552 128v16M576 148v16M600 148v16M454 196v16M480 196v16M504 196v16M528 196v16M552 196v16M576 196v16M600 196v16M624 196v16M648 196v16M672 196v16M500 230v16M546 230v16M620 230v16M650 230v16M718 204v14M742 204v14M768 204v14M794 204v14M826 204v14M850 204v14M876 204v14M902 204v14M458 300v14M482 300v14M506 300v14M530 300v14M592 300v14M614 300v14M636 300v14M660 300v14M684 300v14M630 130v26M654 130v26M678 130v26M272 150h16M272 180h16M338 154h16M338 182h16M338 210h16M338 240h16M274 304v14M300 304v14M322 304v14M344 304v14M740 124h14M780 124h14M820 124h14M860 124h14M734 294h16M780 294h16M840 294h16M900 294h16M734 322h16M780 322h16M840 322h16M900 322h16"/>
          <path class="g" d="M42 352h940M110 366h870M42 404h1060M60 100l38-34M60 206l38-36M46 250l10-10M1106 324v110M972 350l60-60M976 120l60 120"/>
          <circle class="g" fill="none" cx="168" cy="228" r="38"/>
          <path fill="url(#scrawl)" d="M104 268h62v20h-62zM110 300h60v22h-60zM972 240h70v12h-70zM1024 262h60v26h-60zM606 384h80v12h-80z"/>
          <path fill="url(#scrawl)" opacity=".4" d="M408 76h56v24h-56zM486 78h50v8h-50zM976 130h40v40h-40zM1026 90h12v140h-12zM80 362h44v24H80zM1054 370h40v20h-40z"/>
          <g stroke="#888" stroke-width="7" stroke-dasharray="6 2 3 2"><path d="M136 388l24-22M180 388l24-22M234 388l24-22M304 388l22-22M340 388l22-22M378 388l22-22M408 388l22-22M710 388l22-22M734 388l20-22M812 388l22-22M856 388l22-22M904 388l22-22M948 388l22-22M974 110l28-30"/></g>
          <path fill="url(#dots)" opacity=".5" d="M270 404h120v8h-120z"/>
          <g stroke="#333" stroke-width="2"><path d="M68 448h58M68 459h58M68 470h58M68 482h58M68 494h58M68 505h58M68 516h58M68 528h58M68 539h58M266 448h58M266 505h58M266 516h58M266 528h58M266 539h58"/></g>
          <path d="M96 446v96M290 446v22M294 505v24" stroke="#333" stroke-width="7" stroke-dasharray="4 7"/>
          <g stroke="#222" stroke-width="5" stroke-dasharray="8 1 5 1"><path d="M176 449h26M176 460h42M176 471h66M176 482h80M176 493h80M176 505h60M176 516h38M176 528h50M176 539h68M360 449h52M360 460h22M360 471h48M360 482h34M360 493h8M360 505h8M360 516h38M360 528h34M360 539h84M360 551h34M142 574h44M290 574h18M876 449h46M710 466h48M710 473h30M1028 468h48M1028 475h30"/></g>
          <path d="M463 446v110" stroke="#222" stroke-width="9" stroke-dasharray="6 8"/><path d="M454 531h18v14h-18z" fill="#777" stroke="#222" stroke-width="3"/><path d="M276 458l10-4 16 12M278 482h10v14h-10z" class="k"/>
          <path class="k" fill="#fff" d="M58 571h42v20H58z"/><path class="k" fill="url(#dots)" d="M207 571h43v20h-43zM357 571h43v20h-43z"/>
          <path fill="#ddd" d="M528 572h110v28H528z"/><path class="g" fill="url(#specks)" d="M512 542h14v58h-14zM642 542h14v58h-14z"/>
          <path class="g" d="M528 510h112v90M528 510v90M612 552l26-24h34"/><path class="k2" d="M526 571h114"/><path class="k" d="M530 500l30 66M574 510l-14 56M600 540v50M604 556h12v44h-12z"/>
          <path fill="url(#scrawl)" d="M536 532h20v14h-20zM578 512h58v16h-58zM664 546h86v30h-86zM670 524h50v6h-50z"/>
          <path fill="url(#hatch2)" d="M782 490h240v94H782z"/><path class="k dd" d="M782 520h164M782 536h164M782 550h164M960 520h56M960 536h56M960 550h56"/>
          <path fill="url(#crossdark)" stroke="#111" stroke-width="5" d="M744 496h32v34h-32zM1030 494h26v34h-26z"/><path fill="#111" d="M782 584h230v16H782z"/>
          <path fill="#999" d="M754 532h28v20q-18-6-28-20zM1024 530h30q-8 20-30 24z"/>
          <path class="k" d="M770 452h256M770 452v40M1026 452v100M782 464v140M1018 490v90M894 508v76M946 490h12v100h-12zM878 500h36v18h-36zM948 470l44-48M962 486l40-38M820 500l30 24M750 560l60-12M750 578l70-30"/>
          <path class="k" stroke-dasharray="6 4" d="M946 480V470L990 422h60l4 20-40 8L980 490"/>
          <text class="street" x="440" y="389">CHESTNUT STREET</text>
          <text class="street" transform="translate(1060 243) rotate(-90)">26th STREET</text>
          <path fill="url(#scrawl)" d="M750 130h34v9h-34zM754 231h34v9h-34zM302 287h30v9h-30zM496 170h34v9h-34zM910 558h30v12h-30zM884 490h24v6h-24zM968 482h24v6h-24zM1002 434h34v6h-34z"/>
        </svg></div>
        <div class="foot"><h3>C5.2 - Regenwassermana…</h3></div>
      </article>

      <article class="card">
        <div class="thumb"><svg viewBox="54 30 1068 570" preserveAspectRatio="none">
          <path class="k" d="M1114 30v570M968 30v52h146M1114 325h8M1114 382h8M1114 448h8M1114 532h8M1114 546h8"/>
          <path fill="url(#scrawl)" d="M984 33h126v24h-126zM984 57h100v22h-100zM972 35h6v44h-6z"/>
          <path class="g" d="M110 70v70M116 70v70M209 72v70M260 72v70M310 72v70M403 72v70M410 72v70M54 148h42M54 238h42M54 332h42M54 432h42M54 532h42M58 140h40v38H58zM88 248h14v44H88zM151 332v58h-36M190 332v70h-36M190 392h56v40M236 332v54M246 332v54M258 332v100M166 532v68M190 432v70M298 532v68M326 532v68M346 532v68M412 256l12 12v40M412 370l12 12M412 470l14 10M60 432h50"/>
          <path class="k" d="M97 131h34v34H97zM388 131h34v34h-34zM97 220h34v34H97zM388 220h34v34h-34zM97 314h34v34H97zM388 314h34v34h-34zM97 415h34v34H97zM388 415h34v34h-34zM97 517h34v34H97zM388 517h34v34h-34zM422 316h18v30h-18z"/>
          <path d="M112 142V600M408 142V600" stroke="#777" stroke-width="6"/><path d="M112 142V600M408 142V600" stroke="#222" stroke-width="2"/>
          <path d="M112 146H408" stroke="#888" stroke-width="10"/><path class="k" d="M112 142H408M112 151H408"/>
          <path d="M112 237H408M112 331H408M112 432H408M112 534H408" stroke="#777" stroke-width="5"/><path class="k" d="M112 240H408M112 434H408M190 572h56M190 534v56M166 534v56h24M246 534v38"/>
          <path class="g" stroke-dasharray="2 9" d="M430 146h86M430 150h86M430 154h86"/>
          <path class="k2" d="M146 522v26M322 520v28M176 556h28M152 566h24M180 574v24M234 552h24M236 546v12"/>
          <path class="k" d="M102 240h28M90 376h36M378 436h56M400 488h34M298 130v24M90 570h28M196 272l20 32h16M188 250l24-36h20M284 322l30 40M410 236l18-10M410 532l18-8M440 330h20M86 414l22 16"/>
          <g fill="url(#grid)" stroke="#222" stroke-width="2"><circle cx="188" cy="260" r="15"/><circle cx="318" cy="362" r="15"/><circle cx="648" cy="560" r="15"/></g>
          <g color="#666"><use href="#bubble" x="108" y="62"/><use href="#bubble" x="124" y="62"/><use href="#bubble" x="209" y="62"/><use href="#bubble" x="260" y="62"/><use href="#bubble" x="310" y="62"/><use href="#bubble" x="396" y="62"/><use href="#bubble" x="410" y="62"/><use href="#bubble" x="518" y="438"/><use href="#bubble" x="532" y="438"/><use href="#bubble" x="581" y="438"/><use href="#bubble" x="684" y="438"/><use href="#bubble" x="788" y="438"/><use href="#bubble" x="891" y="438"/><use href="#bubble" x="838" y="384"/><use href="#bubble" x="481" y="530"/><use href="#bubble" x="481" y="543"/><use href="#bubble" x="481" y="590"/></g>
          <g fill="#888" stroke="#222" stroke-width="2"><circle cx="298" cy="122" r="7"/><circle cx="84" cy="242" r="7"/><circle cx="95" cy="377" r="7"/><circle cx="435" cy="436" r="7"/><circle cx="435" cy="488" r="7"/><circle cx="604" cy="128" r="7"/><circle cx="604" cy="203" r="7"/><circle cx="562" cy="185" r="7"/><circle cx="688" cy="510" r="7"/><circle cx="744" cy="509" r="7"/><circle cx="895" cy="509" r="7"/><circle cx="502" cy="576" r="7"/></g>
          <path fill="url(#scrawl)" d="M218 208h76v8h-76zM230 214h24v6h-24zM228 298h64v24h-64zM432 223h32v7h-32zM462 327h44v12h-44zM54 410h32v7H54zM432 520h32v7h-32zM682 114h62v18h-62zM682 156h28v6h-28zM682 172h30v6h-30zM596 517h34v7h-34zM700 570h56v12h-56zM700 594h60v6h-60zM498 580h26v20h-26z"/>
          <path d="M838 392v30M250 110v20M632 120v16M632 196v18M648 196v18" stroke="#555" stroke-width="6" stroke-dasharray="4 2"/>
          <path class="k2" d="M582 144h84v40h-84z"/><path class="g" d="M592 154h64v22h-64zM604 136v40M634 136v60M640 150l28-30h14M648 162h34M570 185h34"/>
          <circle cx="562" cy="235" r="13" class="k" fill="#eee"/><path class="k" d="M549 235h148M562 222v26"/>
          <text class="tiny" x="584" y="234">TRASH ENCLOSURE</text>
          <path class="g" d="M526 446v90M532 446v90M581 446v90M684 446v90M788 446v90M891 446v90M490 530h36M524 524h20v20h-20zM572 524h20v20h-20zM675 524h20v20h-20zM778 524h20v20h-20zM882 524h20v20h-20zM640 530v-14l16 10M710 530l18-14M850 520l20 10M536 600v-40h44"/><path class="g dd" d="M838 420v180"/>
          <path d="M532 530v70M581 530v70M684 530v70M788 530v70M891 530v70" stroke="#333" stroke-width="7"/><path d="M532 530v70M581 530v70M684 530v70M788 530v70M891 530v70" stroke="#ccc" stroke-width="2"/>
          <path d="M526 528h116M660 528h60M740 528h106M870 528h38" stroke="#444" stroke-width="4"/><path class="k" d="M907 530v70M465 600q-6-30 40-32q40-6 44 16l-6 16M690 510v46l-6 20h14"/>
          <path d="M1118 552v48" stroke="#555" stroke-width="7" stroke-dasharray="3 4"/>
        </svg></div>
        <div class="foot"><h3>S2.01a - Fundament-/Rah…</h3><p>1. Obergeschosses – Süd</p></div>
      </article>

      <article class="card">
        <div class="thumb"><svg viewBox="36 30 1068 570" preserveAspectRatio="none">
          <path class="k" d="M1097 30v570M951 30v41h146M1097 325h8M1097 382h8M1097 448h8M1097 532h8M1097 546h8"/>
          <path fill="url(#scrawl)" d="M964 33h130v18h-130zM964 49h106v20h-106zM954 35h6v30h-6z"/>
          <path class="g" d="M169 216v50M176 216v50M277 216v50M378 216v50M386 216v50M392 216v50M530 216v50M670 216v50M811 216v50M956 216v50M112 268h60M112 410h60M248 410q-14 4-12 16M320 410v16M386 410h520M446 370q14 2 14 14M608 370q-10 2-10 14M738 370q-10 2-10 14M882 384q0-12 14-14"/>
          <path d="M169 410v54h217v-54M277 410v54" stroke="#ddd" stroke-width="2" fill="none"/>
          <path class="k" d="M170 263h216v148H170zM175 268h206v140H175zM275 266v144M279 266v144"/><path class="g" d="M386 264h570"/>
          <path d="M386 266H904M398 266v118M436 266v144M483 266v144M530 266v118M577 266v144M623 266v118M717 266v144M764 266v144M858 266v144M904 266v144M398 384H728M750 384h60" stroke="#888" stroke-width="7" fill="none"/><path d="M386 266H904M398 266v118M436 266v144M483 266v144M530 266v118M577 266v144M623 266v118M717 266v144M764 266v144M858 266v144M904 266v144M398 384H728" stroke="#fff" stroke-width="3" fill="none"/>
          <path d="M670 266v118M811 266v144" stroke="#777" stroke-width="6"/>
          <path class="k" d="M408 386l8 24M455 386l8 24M502 386l8 24M549 386l8 24M596 386l8 24M644 386l8 24M690 386l8 24M738 386l8 24M784 386l8 24M832 386l8 24M624 386h100M814 384h48M906 264h50v148h-50zM910 268h42v140h-42z"/>
          <path class="k" fill="#fff" d="M816 274h32v24h-32z"/><path class="g" d="M816 274l32 24M848 274l-32 24"/><path class="k2" d="M928 268l10 140"/>
          <path class="k" d="M386 300h20M710 348h24M804 358h20M830 272l8-20h10M800 295h20M890 327h28M934 327h30M908 338h48M931 250v30M290 264l10-12h10M742 250v26M620 420l28-20v-20M658 372v50M934 340l24 14M940 410l20 16M700 394h20"/>
          <g color="#666"><use href="#bubble" x="163" y="209"/><use href="#bubble" x="176" y="209"/><use href="#bubble" x="277" y="209"/><use href="#bubble" x="372" y="209"/><use href="#bubble" x="385" y="209"/><use href="#bubble" x="399" y="209"/><use href="#bubble" x="530" y="209"/><use href="#bubble" x="670" y="209"/><use href="#bubble" x="811" y="209"/><use href="#bubble" x="956" y="209"/><use href="#bubble" x="104" y="264"/><use href="#bubble" x="104" y="276"/><use href="#bubble" x="104" y="399"/><use href="#bubble" x="104" y="411"/></g>
          <g fill="#777" stroke="#222" stroke-width="2"><circle cx="931" cy="245" r="7"/><circle cx="791" cy="294" r="7"/><circle cx="884" cy="327" r="7"/><circle cx="967" cy="327" r="7"/><circle cx="931" cy="426" r="7"/><circle cx="657" cy="426" r="7"/><circle cx="702" cy="394" r="7"/><circle cx="745" cy="350" r="6"/><circle cx="250" cy="583" r="6"/></g>
          <path fill="url(#scrawl)" d="M304 247h36v7h-36zM402 294h34v14h-34zM736 226h12v32h-12zM848 248h44v7h-44zM730 341h32v8h-32zM820 353h34v14h-34zM580 420h36v7h-36zM960 348h64v16h-64zM960 418h60v14h-60zM322 554h52v12h-52zM322 572h46v14h-46zM322 590h18v10h-18zM180 592h20v8h-20z"/>
          <path class="k" fill="none" stroke-dasharray="7 3" d="M954 342q30-8 72 0v28q-36 10-70 0zM954 410q30-8 72 0v26q-36 10-70 0z"/>
          <circle cx="144" cy="523" r="11" class="k" fill="#eee"/><path class="k" d="M132 523H898"/><text class="tiny" x="167" y="521">ROOF FRAMING PLAN</text>
          <circle cx="923" cy="522" r="9" class="k" fill="#fff"/><path d="M918 516l14 6-14 8z" fill="#111"/>
          <path class="k" d="M220 597h84M250 588v8M320 556h-20l-24 40M320 576h-16l-16 20M200 596l14 4"/>
          <path d="M1101 552v48" stroke="#555" stroke-width="7" stroke-dasharray="3 4"/>
        </svg></div>
        <div class="foot"><h3>S2.02 - Dachstuhl- und Da…</h3></div>
      </article>

      <button class="add" type="button">+ Neuer Plan</button>
    </div>
  </section>
</main>
</body>
</html>
```
FILE: styles.css
```css
* { box-sizing: border-box; }

body {
  margin: 0;
  background: #f4f5f8;
  color: #3d3e3f;
  font-family: Lato, "Liberation Sans", sans-serif;
  font-size: 26px;
  line-height: 36px;
}

button { font: inherit; cursor: pointer; }
svg { display: block; flex: none; }
.defs { position: absolute; }

/* Toolbar */
.toolbar {
  position: relative;
  display: flex;
  gap: 16px;
  padding: 26px 20px 32px 28px;
  background: #fff;
  border-bottom: 2px solid #d0d1d8;
  box-shadow: 0 12px 24px -6px rgba(0, 0, 0, .09);
}
.spacer { flex: 1; }
.btn {
  display: flex;
  align-items: center;
  justify-content: center;
  gap: 12px;
  height: 64px;
  padding: 0 27px;
  background: #fff;
  border: 2px solid #cfd0d7;
  border-radius: 6px;
  color: #303133;
  white-space: nowrap;
}
.btn-primary { background: #0d5bff; border-color: #0847d0; color: #fff; }
.btn-menu { padding: 0 37px 0 25px; }
.btn-square { width: 64px; padding: 0; }
.switch { display: flex; }
.switch .btn:first-child { border-radius: 6px 0 0 6px; }
.switch .btn:last-child { width: 62px; border-left: 0; border-radius: 0 6px 6px 0; }
.icon { width: 24px; height: 24px; }
.icon-lg { width: 28px; height: 24px; }
.caret { width: 16px; height: 9px; }
.caret-lg { width: 20px; height: 10px; }

/* Folders */
.content { padding: 32px 32px 22px; }
.folder + .folder { margin-top: 54px; }
.folder-head { display: flex; align-items: center; margin-bottom: 23px; }
.check {
  appearance: none;
  width: 32px;
  height: 32px;
  margin: 0 15px 4px 0;
  background: #fff;
  border: 2px solid #e0e0e0;
  border-radius: 6px;
}
.folder-label { display: flex; align-items: center; gap: 11px; margin: 0 25px 4px 0; }
.folder-icon { width: 32px; height: 26px; }
.drop { width: 44px; height: 44px; padding: 0; }

.grid {
  display: grid;
  grid-template-columns: repeat(auto-fill, 360px);
  gap: 24px;
  padding-left: 40px;
}
.card {
  position: relative;
  height: 280px;
  background: #fff;
  border: 2px solid #cfd0d7;
  border-radius: 4px;
}
.thumb { height: 192px; overflow: hidden; border-bottom: 2px solid #dadadc; }
.thumb svg { width: 100%; height: 190px; }
.foot {
  position: relative;
  display: flex;
  flex-direction: column;
  justify-content: center;
  height: 84px;
  padding: 0 16px 4px;
}
.foot h3,
.foot p { margin: 0; white-space: nowrap; }
.foot h3 { font-size: 26px; line-height: 36px; font-weight: 700; }
.foot p { font-size: 22px; line-height: 36px; }
.badge {
  position: absolute;
  top: 8px;
  right: 8px;
  width: 40px;
  height: 40px;
  background: rgba(77, 136, 255, .88);
  border: 2px solid #397bff;
  border-radius: 50%;
  color: #fff;
  text-align: center;
}
.cube { position: absolute; top: 26px; right: 20px; width: 24px; height: 27px; color: #9a9ba2; }
.add {
  height: 280px;
  background: transparent;
  border: 4px dashed #c9c9c9;
  color: #bcbcbc;
  font-weight: 700;
}

/* Callout on the 3D plan */
.card-marked { z-index: 1; }
.frame {
  position: absolute;
  top: 192px;
  right: -10px;
  width: 82px;
  height: 76px;
  border: 10px solid #ff5a4d;
  filter: drop-shadow(0 5px 3px rgba(0, 0, 0, .6));
}
.arrow {
  position: absolute;
  top: -234px;
  left: 158px;
  width: 172px;
  height: 400px;
  overflow: visible;
  filter: drop-shadow(0 5px 4px rgba(0, 0, 0, .35));
}

/* Plan drawing line styles */
.k { stroke: #444; stroke-width: 2; }
.k2 { stroke: #1c1c1c; stroke-width: 5; }
.g { stroke: #999; stroke-width: 2; }
.r { stroke: #d8545c; stroke-width: 2; }
.b { stroke: #5b8fc4; stroke-width: 2; }
.dd { stroke-dasharray: 14 4 4 4; }
.k:not([fill]), .k2:not([fill]), .g:not([fill]), .r, .b { fill: none; }
.street { font-size: 20px; font-weight: 900; fill: #111; }
.tiny { font-size: 12px; font-weight: 700; fill: #222; }
```
